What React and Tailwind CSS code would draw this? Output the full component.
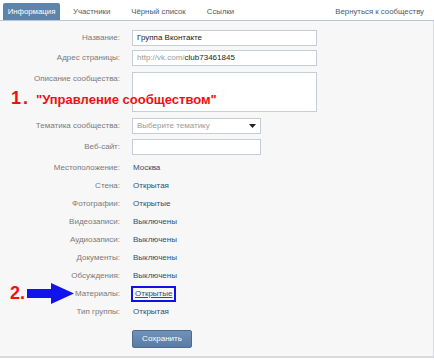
import React from 'react';

const TEXT_ROWS = [
  ['Местоположение:', 'Москва'],
  ['Стена:', 'Открытая'],
  ['Фотографии:', 'Открытые'],
  ['Видеозаписи:', 'Выключены'],
  ['Аудиозаписи:', 'Выключены'],
  ['Документы:', 'Выключены'],
  ['Обсуждения:', 'Выключены'],
];

function Label({ children, top }) {
  return (
    <div className={`w-[120px] shrink-0 text-right text-[#7a7a7a] ${top ? 'pt-[3px]' : ''}`}>
      {children}
    </div>
  );
}

export default function App() {
  return (
    <div
      className="relative w-[434px] h-[360px] bg-white text-[8px] leading-none overflow-hidden"
      style={{ fontFamily: '"Liberation Sans", Arial, sans-serif' }}
    >
      {/* tabs */}
      <div className="flex items-end h-[21px] border-b border-[#b9c6d6] px-[3px] text-[7.8px]">
        <div className="h-[17px] w-[57px] bg-[#5f84ab] text-white flex items-center justify-center rounded-t-[2px]">
          Информация
        </div>
        <div className="h-[17px] flex items-center text-[#4b5a6b] ml-[13px]">Участники</div>
        <div className="h-[17px] flex items-center text-[#4b5a6b] ml-[21px]">Чёрный список</div>
        <div className="h-[17px] flex items-center text-[#4b5a6b] ml-[21px]">Ссылки</div>
        <div className="h-[17px] flex items-center text-[#4b5a6b] ml-auto mr-[7px]">Вернуться к сообществу</div>
      </div>

      {/* content */}
      <div className="h-[337px] bg-[#f7f7f7] border-r border-b-2 border-[#d6dbe2] pt-[9px]">
        <div className="flex items-center gap-[12px] h-[16px]">
          <Label>Название:</Label>
          <div className="w-[185px] h-[16px] bg-white border border-[#c5cdd6] px-[4px] flex items-center text-[#222]">
            Группа Вконтакте
          </div>
        </div>
        <div className="flex items-center gap-[12px] h-[16px] mt-[4px]">
          <Label>Адрес страницы:</Label>
          <div className="w-[185px] h-[16px] bg-white border border-[#c5cdd6] px-[4px] flex items-center text-[#999]">
            http://vk.com/<span className="text-[#222]">club73461845</span>
          </div>
        </div>
        <div className="flex items-start gap-[12px] mt-[6px]">
          <Label top>Описание сообщества:</Label>
          <div className="w-[185px] h-[40px] bg-white border border-[#c5cdd6]" />
        </div>
        <div className="flex items-center gap-[12px] h-[16px] mt-[6px]">
          <Label>Тематика сообщества:</Label>
          <div className="w-[129px] h-[16px] bg-white border border-[#c5cdd6] px-[4px] flex items-center justify-between text-[#999]">
            Выберите тематику
            <svg width="7" height="4" viewBox="0 0 7 4"><path d="M0 0h7L3.5 4z" fill="#222" /></svg>
          </div>
        </div>
        <div className="flex items-center gap-[12px] h-[16px] mt-[5px]">
          <Label>Веб-сайт:</Label>
          <div className="w-[129px] h-[16px] bg-white border border-[#c5cdd6]" />
        </div>

        <div className="mt-[4px]">
          {TEXT_ROWS.map(([l, v]) => (
            <div key={l} className="flex items-center gap-[12px] h-[18px]">
              <Label>{l}</Label>
              <div className="text-[#2f4f72] pl-[1px]">{v}</div>
            </div>
          ))}
          <div className="flex items-center gap-[12px] h-[18px]">
            <Label>Материалы:</Label>
            <div className="-ml-[1px] border-2 border-[#1010e8] px-[2px] py-[2px] text-[#2f4f72] underline">Открытые</div>
          </div>
          <div className="flex items-center gap-[12px] h-[18px]">
            <Label>Тип группы:</Label>
            <div className="text-[#2f4f72] pl-[1px]">Открытая</div>
          </div>
        </div>

        <div className="flex gap-[12px] mt-[9px]">
          <div className="w-[120px]" />
          <button className="w-[60px] h-[18px] bg-gradient-to-b from-[#7092b8] to-[#5a7ba2] border border-[#4c6d93] text-white text-[8px] rounded-[2px]">
            Сохранить
          </button>
        </div>
      </div>

      {/* annotations */}
      <div
        className="absolute left-[11px] top-[89px] flex items-baseline text-[#f01010] font-bold"
        style={{ fontFamily: '"Liberation Sans", Arial, sans-serif' }}
      >
        <span className="text-[18px] tracking-[2px]">1.</span>
        <span className="text-[13px] ml-[6px]">"Управление сообществом"</span>
      </div>
      <div
        className="absolute left-[10px] top-[284px] text-[#f01010] font-bold text-[18px]"
        style={{ fontFamily: '"Liberation Sans", Arial, sans-serif' }}
      >
        2.
      </div>
      <svg className="absolute left-[27px] top-[283px]" width="47" height="21" viewBox="0 0 47 21">
        <path d="M0 6h24V0l23 10.5L24 21v-6H0z" fill="#1212ee" />
      </svg>
    </div>
  );
}
